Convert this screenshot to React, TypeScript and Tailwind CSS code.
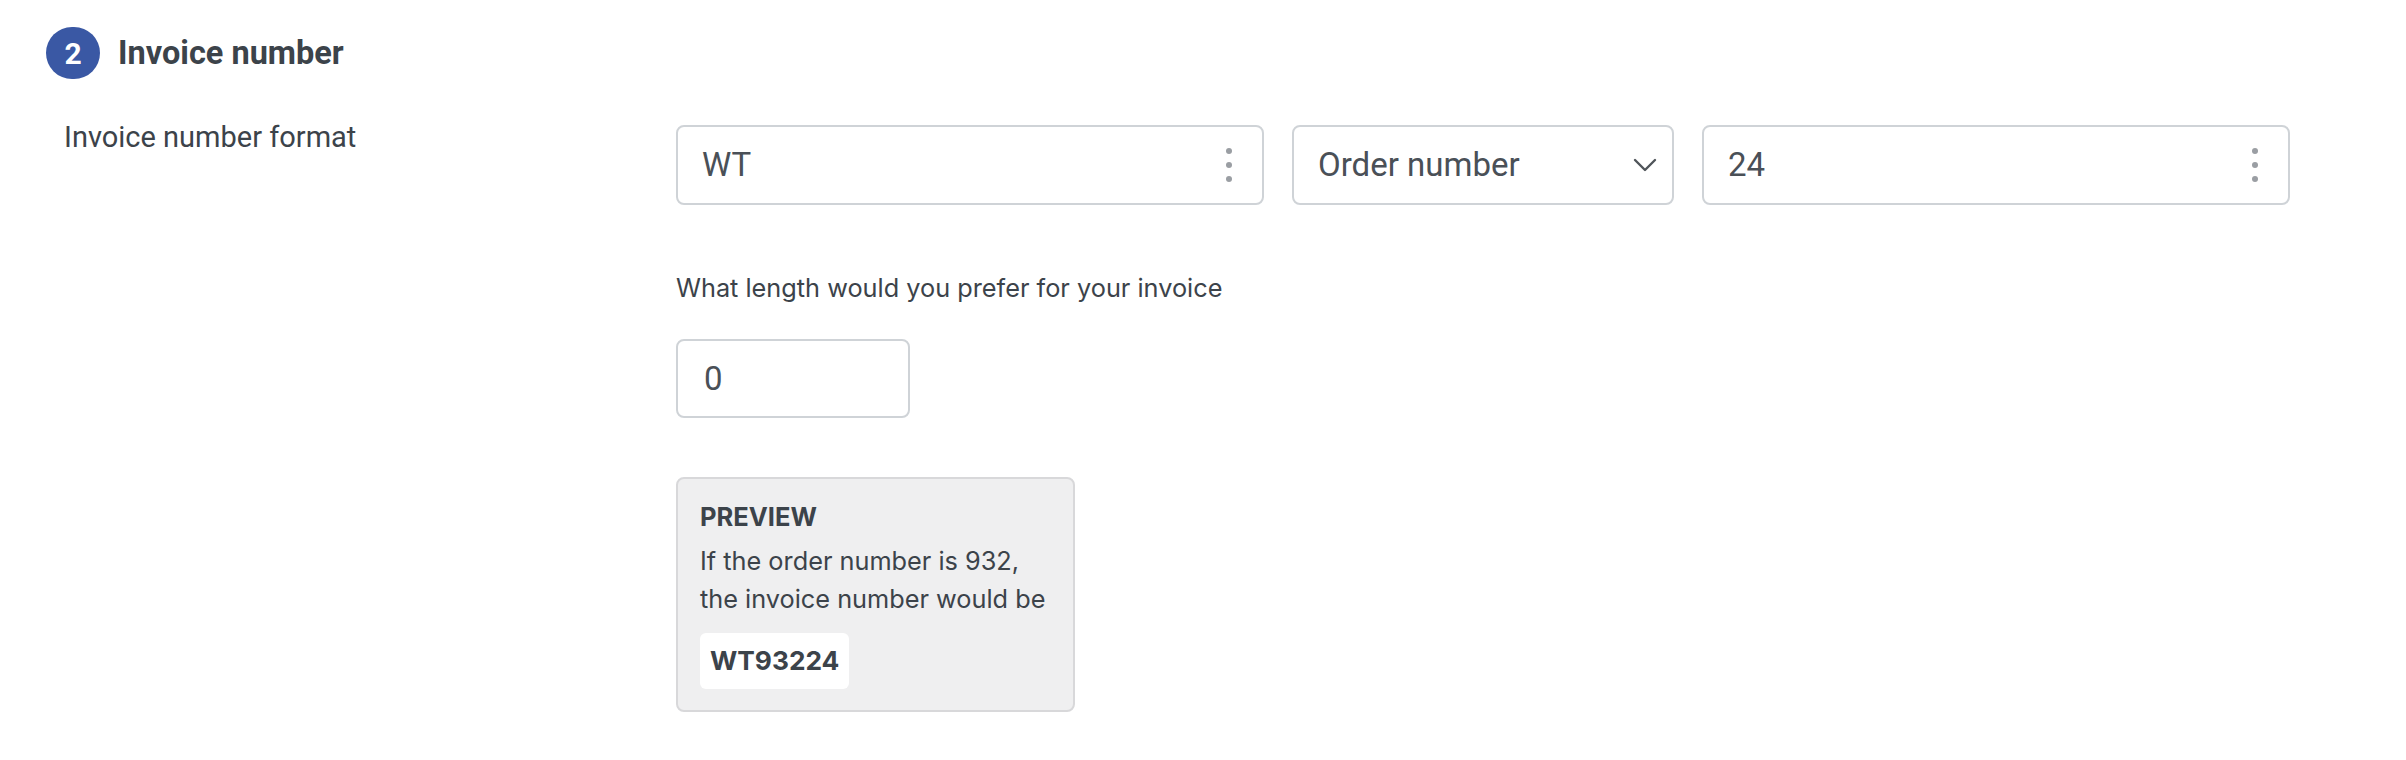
const roboto = { fontFamily: 'Roboto, "Liberation Sans", sans-serif' }
const inter = { fontFamily: 'Inter, "Liberation Sans", sans-serif' }

function Dots() {
  return (
    <div className="flex flex-col items-center gap-[8px]">
      <span className="h-[6px] w-[6px] rounded-full bg-[#9a9ea3]" />
      <span className="h-[6px] w-[6px] rounded-full bg-[#9a9ea3]" />
      <span className="h-[6px] w-[6px] rounded-full bg-[#9a9ea3]" />
    </div>
  )
}

function Field({ value, className }: { value: string; className: string }) {
  return (
    <div
      className={`flex h-[80px] items-center justify-between rounded-[8px] border-2 border-[#cfd3d7] bg-white pl-[24px] pr-[30px] text-[33px] text-[#4a5057] ${className}`}
      style={roboto}
    >
      <span>{value}</span>
      <Dots />
    </div>
  )
}

export default function App() {
  return (
    <div className="min-h-[760px] bg-white pl-[46px] pt-[27px] text-[#3c434a]">
      <div className="flex items-center gap-[18px]">
        <div
          className="flex h-[52px] w-[54px] items-center justify-center rounded-full bg-[#3a58a4] text-[30px] font-bold text-white"
          style={roboto}
        >
          2
        </div>
        <h2 className="text-[32.5px] font-bold leading-none" style={roboto}>
          Invoice number
        </h2>
      </div>

      <div className="mt-[46px] grid grid-cols-[630px_1fr]">
        <div className="-mt-[5px] pl-[18px] text-[29px] leading-[34px]" style={roboto}>
          Invoice number format
        </div>

        <div className="flex flex-col">
          <div className="flex gap-[28px]">
            <Field value="WT" className="w-[588px]" />
            <div
              className="flex h-[80px] w-[382px] items-center justify-between rounded-[8px] border-2 border-[#cfd3d7] bg-white pl-[24px] pr-[14px] text-[33px] text-[#4a5057]"
              style={roboto}
            >
              <span>Order number</span>
              <svg width="24" height="14" viewBox="0 0 24 14" fill="none" className="mr-[1px]">
                <path d="M2 2l10 10L22 2" stroke="#50555a" strokeWidth="2.4" strokeLinecap="round" strokeLinejoin="round" />
              </svg>
            </div>
            <Field value="24" className="w-[588px]" />
          </div>

          <p className="mt-[68px] text-[25.3px] leading-[30px] text-[#3c434a]" style={inter}>
            What length would you prefer for your invoice
          </p>

          <div
            className="mt-[36px] flex h-[79px] w-[234px] items-center rounded-[8px] border-2 border-[#cfd3d7] bg-white pl-[26px] text-[33px] text-[#4a5057]"
            style={roboto}
          >
            0
          </div>

          <div
            className="mt-[59px] w-[399px] rounded-[8px] border-2 border-[#d8d8da] bg-[#efeff0] pb-[21px] pl-[22px] pr-[20px] pt-[22px]"
            style={inter}
          >
            <div className="text-[25.5px] font-bold leading-[32px] text-[#3c434a]">PREVIEW</div>
            <p className="mt-[9px] text-[25.3px] leading-[38px] text-[#3c434a]">
              If the order number is 932,
              <br />
              the invoice number would be
            </p>
            <div className="mt-[15px] inline-flex h-[56px] items-center rounded-[6px] bg-white px-[10px] text-[26.3px] font-bold text-[#3c434a]">
              WT93224
            </div>
          </div>
        </div>
      </div>
    </div>
  )
}
